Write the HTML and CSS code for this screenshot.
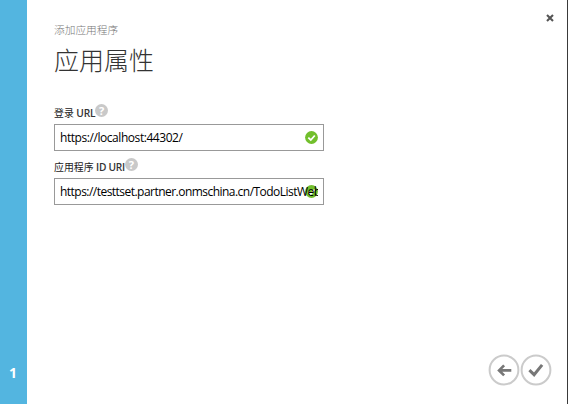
FILE: index.html
```html
<!DOCTYPE html>
<html lang="zh-CN">
<head>
<meta charset="utf-8">
<title>应用属性</title>
<link rel="stylesheet" href="styles.css">
</head>
<body>
<div class="dialog">
  <aside class="rail"><span class="step">1</span></aside>
  <main class="content">
    <p class="crumb">添加应用程序</p>
    <h1 class="title">应用属性</h1>
    <div class="field">
      <div class="label"><span class="label-text">登录 <b>URL</b></span><span class="help">?</span></div>
      <div class="box"><span class="value">https://localhost:44302/</span>
        <svg class="valid" viewBox="0 0 13 13"><circle cx="6.5" cy="6.5" r="6.4" fill="#72bf2c"/><path d="M3.3 6.6l2.5 2.4 4-4.5" fill="none" stroke="#fff" stroke-width="1.8"/></svg>
      </div>
    </div>
    <div class="field">
      <div class="label"><span class="label-text">应用程序 <b>ID URI</b></span><span class="help">?</span></div>
      <div class="box"><span class="value value-id">https://testtset.partner.onmschina.cn/TodoListWeb</span>
        <svg class="valid" viewBox="0 0 13 13"><circle cx="6.5" cy="6.5" r="6.4" fill="#72bf2c"/><path d="M3.3 6.6l2.5 2.4 4-4.5" fill="none" stroke="#fff" stroke-width="1.8"/></svg>
      </div>
    </div>
  </main>
  <svg class="close" viewBox="0 0 8 8"><path d="M1 1l6 6M7 1l-6 6" stroke="#555" stroke-width="2.1"/></svg>
  <div class="actions">
    <svg class="round" viewBox="0 0 32 32"><circle cx="16" cy="16" r="14.4" fill="none" stroke="#cbcbcb" stroke-width="2"/><path d="M23.3 16.4H12M16.1 11.4l-5 5 5 5" fill="none" stroke="#777" stroke-width="2.7"/></svg>
    <svg class="round" viewBox="0 0 32 32"><circle cx="16" cy="16" r="14.4" fill="none" stroke="#cbcbcb" stroke-width="2"/><path d="M9.4 16.2l4.7 4.5 8-9.8" fill="none" stroke="#777" stroke-width="3"/></svg>
  </div>
</div>
</body>
</html>
```

FILE: styles.css
```css
* { box-sizing: border-box; }
body { margin: 0; background: #fff; font-family: "Open Sans", "Noto Sans CJK SC", sans-serif; }
.dialog { position: relative; display: flex; width: 568px; height: 404px; border-right: 1px solid #3a3a3a; overflow: hidden; }
.rail { display: flex; flex: none; width: 27px; align-items: flex-end; justify-content: center; padding: 0 1px 21px 0; background: #53b5e0; color: #fff; }
.step { font: bold 14px/20px "Open Sans", sans-serif; }
.content { flex: 1; padding: 22px 0 0 27px; }
.crumb { margin: 0; font-size: 10.7px; line-height: 16px; font-weight: 300; color: #777; white-space: nowrap; }
.title { margin: 3px 0 28px; font-size: 25px; line-height: 36px; font-weight: 300; color: #333; font-family: "Noto Sans CJK SC", sans-serif; }
.field { width: 270px; height: 54px; }
.label { display: flex; height: 19px; font-size: 9.9px; line-height: 17px; color: #222; white-space: nowrap; }
.label b { font-size: 10.2px; font-weight: 600; letter-spacing: -0.25px; color: #333; }
.help { width: 13px; height: 13px; margin-top: -1px; border-radius: 50%; background: #c9c9c9; color: #fff; font: bold 11px/13px "Open Sans", sans-serif; text-align: center; }
.box { position: relative; height: 27px; padding: 0 5px; border: 1px solid #999; }
.value { position: relative; z-index: 1; display: block; overflow: hidden; font-size: 12px; line-height: 25px; letter-spacing: -0.44px; color: #000; white-space: nowrap; }
.value-id { letter-spacing: -0.53px; }
.valid { position: absolute; top: 6px; right: 5px; width: 13px; height: 13px; }
.close { position: absolute; top: 14px; right: 13.5px; width: 8px; height: 8px; }
.actions { position: absolute; right: 14.6px; bottom: 18px; display: flex; }
.round { width: 32px; height: 32px; }
```
